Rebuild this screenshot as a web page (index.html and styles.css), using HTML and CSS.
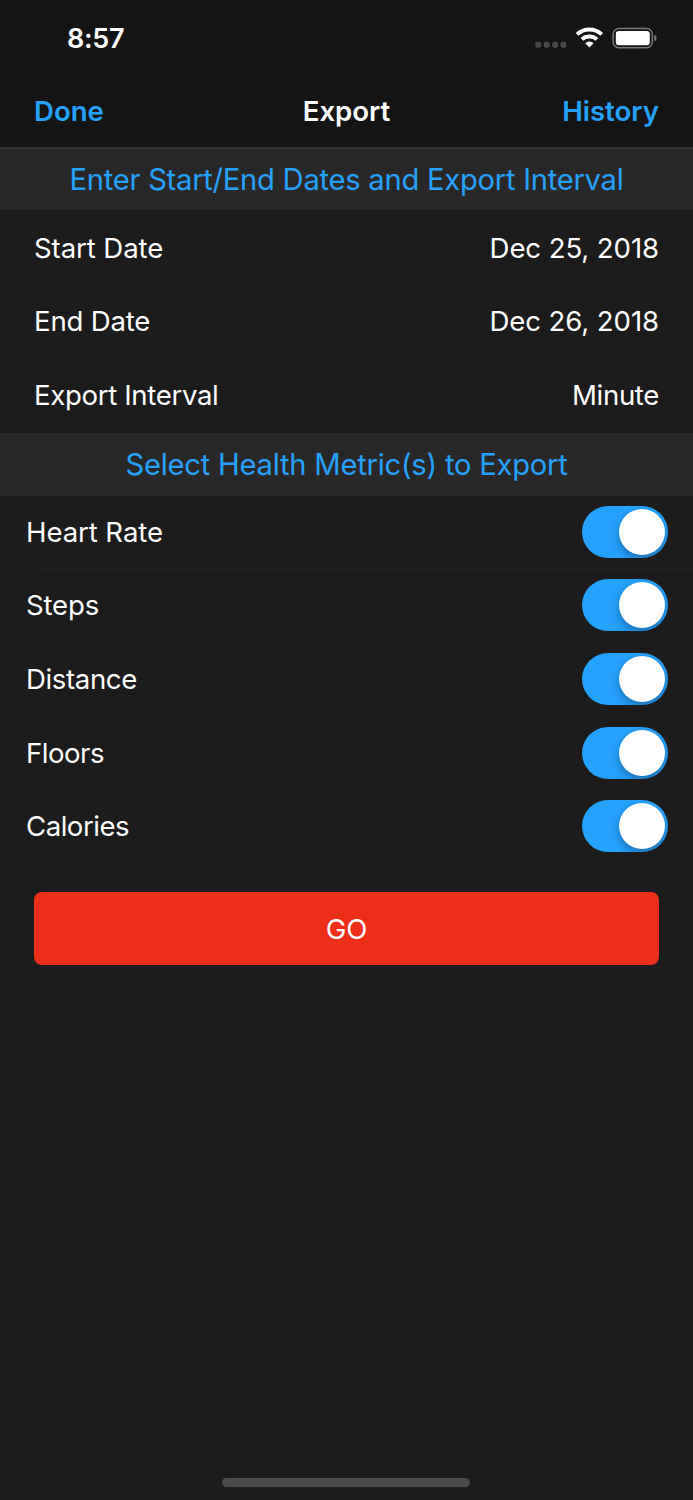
FILE: index.html
```html
<!DOCTYPE html>
<html lang="en">
<head>
<meta charset="utf-8">
<title>Export</title>
<link rel="stylesheet" href="styles.css">
</head>
<body>
<div class="screen">
  <header class="top">
    <div class="status">
      <span class="time">8:57</span>
      <svg class="indicators" width="124" height="24" viewBox="0 0 124 24">
        <g fill="#494949"><rect x="1.300" y="16.700" width="6" height="6" rx="2.200"/><rect x="9.700" y="16.700" width="6" height="6" rx="2.200"/><rect x="18.100" y="16.700" width="6" height="6" rx="2.200"/><rect x="26.400" y="16.700" width="6" height="6" rx="2.200"/></g>
        <g fill="none" stroke="#fff" stroke-width="4"><path d="M43.100 9.400a17.700 17.700 0 0 1 24.600 0"/><path d="M47.900 14.400a11 11 0 0 1 15 0"/></g>
        <path d="M51.200 18.200a6.200 6.200 0 0 1 8.400 0L55.400 22.400z" fill="#fff"/>
        <rect x="79.100" y="3.500" width="39.200" height="19.200" rx="5.700" fill="none" stroke="#797979" stroke-width="1.500"/>
        <rect x="81.800" y="6" width="34" height="14.200" rx="3.200" fill="#fff"/>
        <path d="M120.200 9.600q2.400 1.200 2.400 3.500t-2.400 3.500z" fill="#797979"/>
      </svg>
    </div>
    <nav class="nav">
      <a class="link">Done</a>
      <h1 class="title">Export</h1>
      <a class="link right">History</a>
    </nav>
  </header>
  <h2 class="section first"><span class="dates-heading">Enter Start/End Dates and Export Interval</span></h2>
  <div class="fields">
    <div class="row"><span class="start">Start Date</span><span class="date">Dec 25, 2018</span></div>
    <div class="row"><span class="end">End Date</span><span class="date">Dec 26, 2018</span></div>
    <div class="row"><span class="interval">Export Interval</span><span class="minute">Minute</span></div>
  </div>
  <h2 class="section"><span class="metrics-heading">Select Health Metric(s) to Export</span></h2>
  <div class="metrics">
    <div class="row"><span class="heart">Heart Rate</span><span class="switch"><i class="knob"></i></span></div>
    <div class="row"><span class="steps">Steps</span><span class="switch"><i class="knob"></i></span></div>
    <div class="row"><span class="distance">Distance</span><span class="switch"><i class="knob"></i></span></div>
    <div class="row"><span class="floors">Floors</span><span class="switch"><i class="knob"></i></span></div>
    <div class="row"><span class="calories">Calories</span><span class="switch"><i class="knob"></i></span></div>
  </div>
  <button class="go">GO</button>
  <div class="home"></div>
</div>
</body>
</html>
```
FILE: styles.css
```css
* { box-sizing: border-box; }
body { margin: 0; background: #1c1c1c; }
.screen {
  width: 693px; height: 1500px;
  display: flex; flex-direction: column;
  background: #1c1c1c; color: #fff;
  font: 400 27.6px/34px Inter, "Liberation Sans", sans-serif;
}
.top { height: 147px; background: #141414; }
.status { height: 74px; padding: 21px 35px 0 67px; display: flex; justify-content: space-between; }
.time { padding-top: 1px; font-size: 27px; font-weight: 600; letter-spacing: -.3px; }
.indicators { margin-top: 4px; }
.nav {
  height: 73px; padding: 0 34px;
  display: grid; grid-template-columns: 1fr auto 1fr; align-items: center;
}
.title { margin: 0; font-size: inherit; font-weight: 600; }
.link { color: #25a2ff; font-weight: 600; }
.right { text-align: right; }
.section {
  margin: 0; height: 63px; padding-top: 1px;
  display: flex; align-items: center; justify-content: center;
  background: #282828; color: #25a2ff;
  font-size: 29.2px; font-weight: 400;
}
.first { padding: 0; border-top: 2px solid #303030; }
.dates-heading { letter-spacing: -.27px; }
.metrics-heading { letter-spacing: -.24px; }
.fields { height: 222.500px; }
.row {
  height: 73.660px; padding: 2px 34px 0;
  display: flex; align-items: center; justify-content: space-between;
  background: linear-gradient(#222, #222) 34px 100% / 100% 1px no-repeat;
}
.row:last-child { background: none; }
.start, .date, .heart { letter-spacing: -.1px; }
.end, .steps { letter-spacing: -.2px; }
.interval, .minute { letter-spacing: -.35px; }
.distance { letter-spacing: -.38px; }
.floors, .calories { letter-spacing: -.5px; }
.metrics { padding-top: .2px; }
.metrics .row { padding: 0 25px 1.800px 26px; }
.switch {
  width: 86px; height: 52px; padding: 3px; border-radius: 26px;
  display: flex; justify-content: flex-end; align-items: center;
  background: #25a2ff; overflow: hidden;
}
.knob { width: 46px; height: 46px; border-radius: 50%; background: #fff; box-shadow: 0 4px 10px rgba(0,0,0,.32); }
.go {
  height: 73px; margin: 28.500px 34px 0; padding: 0;
  border: 0; border-radius: 8px; background: #ed2e19; color: #fff;
  font: inherit;
}
.home { width: 248px; height: 9px; margin: auto 223px 13px 222px; border-radius: 5px; background: #4a4a4a; }
```
